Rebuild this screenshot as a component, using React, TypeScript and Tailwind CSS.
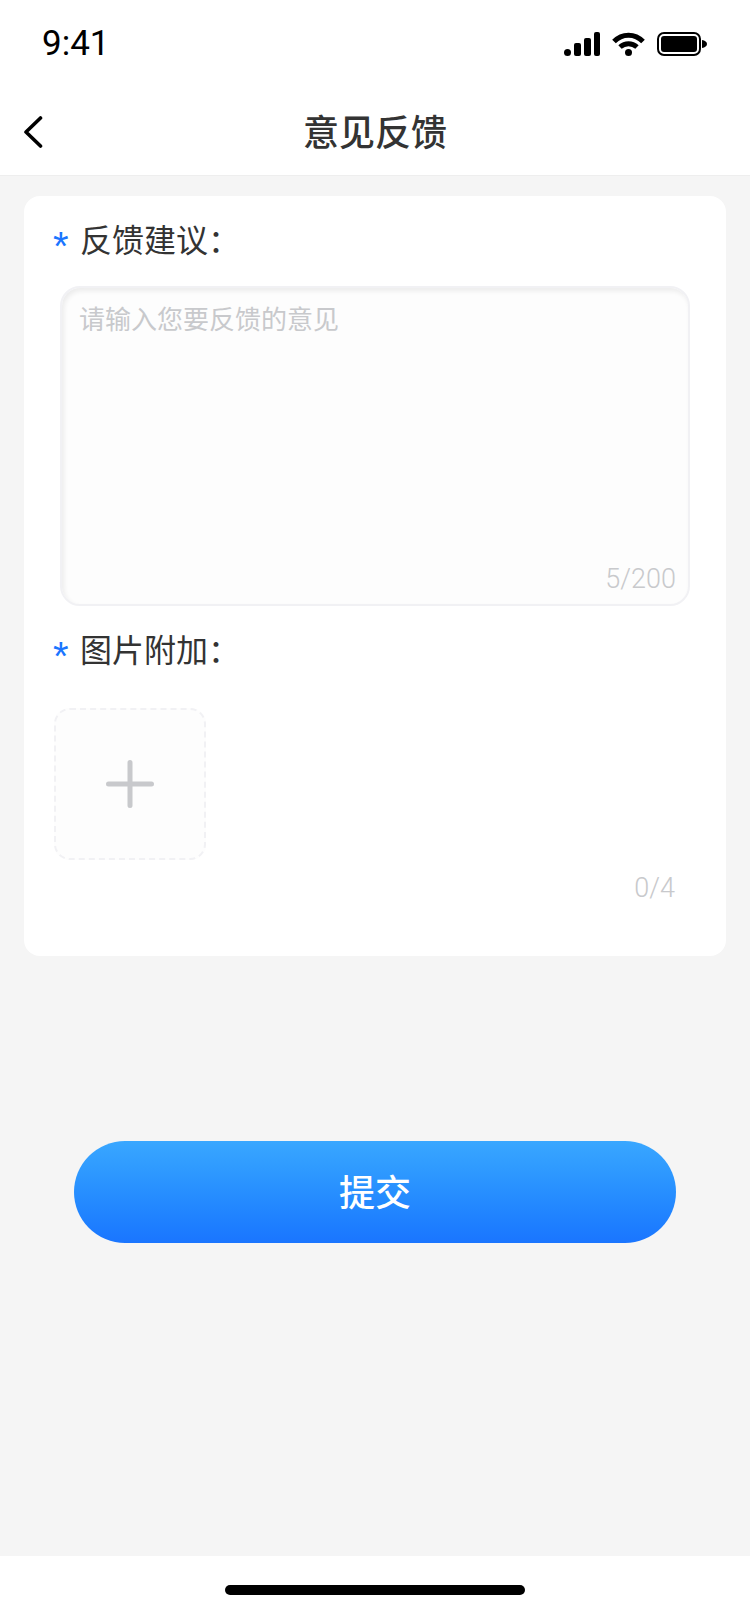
import React from "react";

const SANS = "font-['Inter','Noto_Sans_CJK_SC',sans-serif]";

function StatusIcons() {
  return (
    <div className="flex items-center gap-[12px]">
      <svg width="36" height="24" viewBox="0 0 36 24" fill="#000">
        <rect x="0" y="17" width="7" height="7" rx="3.5" />
        <rect x="10" y="11" width="7" height="13" rx="2" />
        <rect x="20" y="6" width="7" height="18" rx="2" />
        <rect x="30" y="0" width="6" height="24" rx="2" />
      </svg>
      <svg width="33" height="24" viewBox="0 0 33 24" fill="none" stroke="#000" strokeWidth="5">
        <path d="M2 9.500C10 1 23 1 31 9.500" />
        <path d="M8 15C13 10.500 20 10.500 25 15" />
        <circle cx="16.500" cy="20.500" r="3.500" fill="#000" stroke="none" />
      </svg>
      <svg width="50" height="24" viewBox="0 0 50 24" fill="none">
        <rect x="1" y="1" width="42" height="22" rx="6" stroke="#000" strokeWidth="2" />
        <rect x="4" y="4" width="36" height="16" rx="3" fill="#000" />
        <path d="M45 8c3 .5 5 2 5 4s-2 3.500-5 4z" fill="#000" />
      </svg>
    </div>
  );
}

function Label({ text }: { text: string }) {
  return (
    <div className="flex h-[40px] items-center">
      <span className="-ml-[1px] h-[40px] w-[27px] font-['Liberation_Sans',sans-serif] text-[40px] leading-[50px] text-[#1a75ff]">*</span>
      <span className="text-[32px] leading-[40px] text-[#333333]">{text}</span>
    </div>
  );
}

export default function App() {
  return (
    <div className={`${SANS} flex h-[1624px] w-[750px] flex-col overflow-hidden bg-[#f5f5f5]`}>
      <header className="h-[176px] border-b border-[#eeeeee] bg-white">
        <div className="flex h-[88px] items-center justify-between pr-[43px] pl-[42px]">
          <span className="font-['Roboto',sans-serif] text-[35px] leading-[40px] font-normal text-black">9:41</span>
          <StatusIcons />
        </div>
        <div className="relative flex h-[87px] items-center justify-center pt-[2px]">
          <svg className="absolute top-[28px] left-[23px]" width="20" height="32" viewBox="0 0 20 32" fill="none" stroke="#000" strokeWidth="3.600" strokeLinecap="round" strokeLinejoin="round">
            <path d="M17.500 2 3 16l14.500 14" />
          </svg>
          <h1 className="text-[36px] leading-[46px] font-medium text-[#333333]">意见反馈</h1>
        </div>
      </header>

      <main className="flex flex-1 flex-col items-center">
        <section className="mt-[20px] h-[760px] w-[702px] rounded-[16px] bg-white px-[30px] pt-[25px]">
          <Label text="反馈建议：" />
          <div className="mt-[25px] ml-[6px] flex h-[320px] w-[630px] flex-col justify-between rounded-[20px] border-2 border-[#f1f1f4] bg-[#fdfdfd] pt-[14px] pr-[12px] pb-[7px] pl-[17px] shadow-[inset_2px_3px_5px_rgba(0,0,0,0.07)]">
            <div className="text-[26px] leading-[36px] text-[#c8c9cc]">请输入您要反馈的意见</div>
            <div className="text-right font-['Roboto',sans-serif] text-[27px] leading-[36px] font-light text-[#c8c9cc]">5/200</div>
          </div>
          <div className="mt-[25px]">
            <Label text="图片附加：" />
          </div>
          <div className="mt-[37px] flex h-[152px] w-[152px] items-center justify-center rounded-[16px] border-2 border-dashed border-[#f1f1f4] bg-[#fdfdfd]">
            <svg width="48" height="48" viewBox="0 0 48 48" fill="none" stroke="#c8c9cc" strokeWidth="5" strokeLinecap="round">
              <path d="M2.500 24h43M24 2.500v43" />
            </svg>
          </div>
          <div className="mt-[10px] pr-[21px] text-right font-['Roboto',sans-serif] text-[27px] leading-[36px] font-light text-[#c8c9cc]">0/4</div>
        </section>

        <button className="mt-[185px] h-[102px] w-[602px] rounded-[51px] bg-gradient-to-b from-[#39a7ff] to-[#1a75ff] pt-[2px] text-[36px] font-medium text-white">
          提交
        </button>
      </main>

      <footer className="flex h-[68px] justify-center bg-white pt-[29px]">
        <div className="h-[10px] w-[300px] rounded-[5px] bg-black" />
      </footer>
    </div>
  );
}
